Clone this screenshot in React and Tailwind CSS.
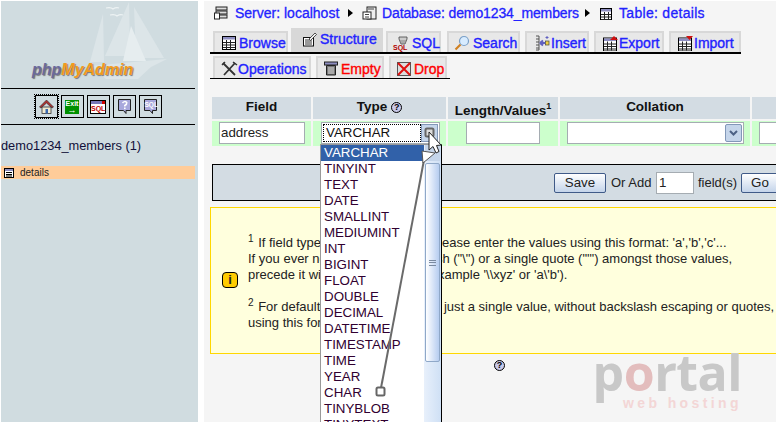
import React from "react";

const IconBox = ({ children, dotted }) => (
  <div className={`w-[23px] h-[23px] shrink-0 flex items-center justify-center border border-black ${dotted ? "outline-1 outline-dotted outline-black" : ""}`}>
    {children}
  </div>
);

const TableGlyph = ({ x = 0, y = 0, w = 13, h = 13 }) => (
  <g>
    <rect x={x + 0.5} y={y + 0.5} width={w} height={h} fill="#fff" stroke="#000" />
    <rect x={x + 1} y={y + 1} width={w - 1} height="2.5" fill="#8d8dc0" />
    <path d={`M${x + 1} ${y + 6.5}H${x + w} M${x + 1} ${y + 9}H${x + w} M${x + 1} ${y + 11.5}H${x + w} M${x + 4.5} ${y + 4}V${y + h} M${x + 8.5} ${y + 4}V${y + h}`} stroke="#222" strokeWidth="1" />
  </g>
);

const Svg = ({ w = 16, h = 16, children, className = "" }) => (
  <svg width={w} height={h} viewBox={`0 0 ${w} ${h}`} className={`shrink-0 ${className}`}>{children}</svg>
);

const Tab = ({ icon, label, red, active, cls }) => (
  <div className={`shrink-0 flex items-center border-t-2 border-x-2 border-[#d8d8d8] ${active ? "bg-[#d8d8d8] pb-[4px]" : "bg-[#e8e8e8] pt-[1px]"} ${cls}`}>
    {icon}
    <span className={`text-[14px] leading-none whitespace-nowrap ${red ? "text-[#ff0000]" : "text-[#2222ff]"}`} style={{ WebkitTextStroke: "0.35px currentColor" }}>{label}</span>
  </div>
);

const types = ["VARCHAR","TINYINT","TEXT","DATE","SMALLINT","MEDIUMINT","INT","BIGINT","FLOAT","DOUBLE","DECIMAL","DATETIME","TIMESTAMP","TIME","YEAR","CHAR","TINYBLOB","TINYTEXT"];

const Help = ({ className = "" }) => (
  <span className={`inline-flex w-[11px] h-[11px] rounded-full border border-black bg-[#c8c8e8] items-center justify-center text-[9px] leading-none text-black font-bold ${className}`}>?</span>
);

const Th = ({ w, children, cls }) => (
  <div className={`${w} shrink-0 h-[22px] bg-[#d3dce3] flex justify-center text-[13.5px] font-bold text-[#111] ${cls || "items-center pb-[2px]"}`}>{children}</div>
);

export default function App() {
  return (
    <div className="relative w-[776px] h-[422px] overflow-hidden flex bg-white text-black" style={{ fontFamily: '"Liberation Sans", Arial, sans-serif' }}>
      {/* Sidebar */}
      <aside className="w-[197px] h-[421px] mt-[1px] ml-[1px] shrink-0 bg-[#d0dce0] flex flex-col relative">
        <div className="h-[87px] relative shrink-0 overflow-hidden">
          <svg width="197" height="87" className="absolute left-0 top-0">
            <g fill="#dce5e8">
              <path d="M128 1 L129 55 L104 55 Z" />
              <path d="M102 13 L103 61 L89 61 Z" />
              <path d="M133 6 L163 57 L135 57 Z" />
              <path d="M130 25 L145 60 L122 60 Z" fill="#e6edef" />
              <path d="M89 65 L166 58 L150 66 L137 78 L105 78 Z" />
            </g>
            <path d="M105 7 q5 -1 7 1 q3 -2 6 -1 M109 14 q5 -1 7 1 q3 -2 6 -1" stroke="#eef3f4" strokeWidth="1.2" fill="none" />
          </svg>
          <div className="absolute left-[31px] top-[61px] text-[16px] font-bold italic leading-none" style={{ textShadow: "1px 1px 1px #777" }}>
            <span className="text-[#6a6a9c]">php</span><span className="text-[#f29b1d]">MyAdmin</span>
          </div>
        </div>
        <div className="w-[194px] border-y border-black h-[37px] flex items-center justify-center gap-[3px] shrink-0">
          <IconBox dotted>
            <Svg w={15} h={15}>
              <path d="M7.500 1 L0.500 8 L2 9 L7.500 4 L13 9 L14.500 8 Z" fill="#b03030" stroke="#333" strokeWidth=".7" />
              <rect x="3" y="8" width="9" height="6.500" fill="#f0ead0" stroke="#333" strokeWidth=".8" />
              <rect x="6.500" y="10" width="2.500" height="4.500" fill="#3868b0" />
            </Svg>
          </IconBox>
          <IconBox>
            <div className="w-[14px] h-[14px] bg-[#009000] flex flex-col items-center text-white text-[7px] font-bold leading-[7px]">
              <span>Exit</span><span className="text-[9px] leading-[7px]">→</span>
            </div>
          </IconBox>
          <IconBox>
            <div className="w-[16px] h-[14px] border border-black bg-white flex flex-col">
              <div className="h-[3px] bg-[#7878b8] flex justify-end"><div className="w-[3px] h-[3px] bg-[#d00000]" /></div>
              <span className="text-[#c00000] text-[7px] font-bold leading-[9px] text-center">SQL</span>
            </div>
          </IconBox>
          <IconBox>
            <Svg w={15} h={17}>
              <path d="M1.500 1.500H13.500V12.500H9V15.500L6.500 12.500H1.500Z" fill="#a8a8dc" stroke="#222" />
              <path d="M5.500 5Q7.500 2.500 9.800 4.500Q10 6.500 7.800 7.500V8.500" stroke="#fff" strokeWidth="1.500" fill="none" />
              <rect x="7" y="9.500" width="1.600" height="1.600" fill="#fff" />
            </Svg>
          </IconBox>
          <IconBox>
            <div className="relative w-[15px] h-[17px]">
              <Svg w={15} h={17}>
                <path d="M1.500 1.500H13.500V12.500H9.500V15.500L7 12.500H1.500Z" fill="#a8a8dc" stroke="#222" />
              </Svg>
              <span className="absolute left-[2px] top-[4px] text-white text-[6.500px] font-bold leading-none">SQL</span>
            </div>
          </IconBox>
        </div>
        <div className="text-[12.8px] leading-[16px] mt-[13px] text-[#10103a] shrink-0">demo1234_members (1)</div>
        <div className="w-[194px] h-[13px] mt-[12px] bg-[#ffcc99] flex items-center pl-[3px] gap-[6px] shrink-0">
          <Svg w={10} h={10}>
            <rect x=".5" y=".5" width="9" height="9" fill="#fff" stroke="#000" />
            <rect x="1" y="1" width="8" height="2" fill="#8d8dc0" />
            <path d="M2 4.500H8 M2 6.500H8 M2 8H8" stroke="#000" />
          </Svg>
          <span className="text-[10px] leading-none text-[#222]">details</span>
        </div>
      </aside>
      <div className="w-[6px] shrink-0 bg-white" />
      {/* Main */}
      <main className="w-[572px] shrink-0 h-full bg-[#f5f5f5] mt-[1px] overflow-hidden">
        <div className="w-[800px]">
          <div className="h-[24px] pl-[10px] flex items-center text-[14px] text-[#2222ff]" style={{ WebkitTextStroke: "0.3px currentColor" }}>
            <Svg w={16} h={14}>
              <rect x="2" y="1" width="11" height="3" fill="#ddd" stroke="#222" />
              <rect x="2" y="5" width="11" height="3" fill="#ddd" stroke="#222" />
              <rect x="2" y="9" width="11" height="3" fill="#ddd" stroke="#222" />
              <rect x="0.500" y="7" width="5" height="6" fill="#fff" stroke="#222" />
            </Svg>
            <span className="ml-[5px] w-[105px] whitespace-nowrap">Server: localhost</span>
            <span className="w-0 h-0 border-y-[4px] border-y-transparent border-l-[5px] border-l-black ml-[8px] mr-[9px]" />
            <Svg w={15} h={14}>
              <rect x="5" y="1" width="9" height="12" fill="#eee" stroke="#222" />
              <rect x="1" y="6" width="8" height="7" fill="#fff" stroke="#222" />
              <path d="M6 3H12 M3 8.500H7 M3 11H7" stroke="#444" />
            </Svg>
            <span className="ml-[5px] w-[197px] whitespace-nowrap tracking-[-0.12px]">Database: demo1234_members</span>
            <span className="w-0 h-0 border-y-[4px] border-y-transparent border-l-[5px] border-l-black ml-[6px] mr-[10px]" />
            <Svg w={12} h={13}><TableGlyph w={11} h={11} y={1} /></Svg>
            <span className="ml-[7px] tracking-[0.3px]">Table: details</span>
          </div>
          <div className="w-[531px] ml-[6px] border-b-[2px] border-black flex items-end h-[29px]">
            <Tab cls="ml-[3px] w-[75px] h-[21px] pl-[7px] gap-[3px]" label="Browse" icon={<Svg w={14} h={14}><TableGlyph /></Svg>} />
            <Tab active cls="ml-[3px] w-[92px] h-[24px] pl-[9px] gap-[3px]" label="Structure" icon={<Svg w={15} h={15}>
              <rect x="1.500" y="5.500" width="10" height="8.500" fill="#fff" stroke="#111" />
              <path d="M3 8H10 M3 10H10 M3 12H10" stroke="#333" />
              <path d="M7 7L13 1L14.500 2.500L8.500 8.500Z" fill="#eee" stroke="#111" strokeWidth=".7" />
            </Svg>} />
            <Tab cls="ml-[3px] w-[55px] h-[21px] pl-[5px] gap-[2px]" label="SQL" icon={<div className="relative w-[17px] h-[15px] shrink-0">
              <Svg w={17} h={15}>
                <path d="M6 1H14V3L12 8H8L6 3Z" fill="#ccc" stroke="#444" strokeWidth=".8" />
                <path d="M8 4V8 M10 4V8 M12 4V8" stroke="#888" />
              </Svg>
              <span className="absolute left-0 top-[8px] text-[#b00000] text-[7px] font-bold leading-none">SQL</span>
            </div>} />
            <Tab cls="ml-[6px] w-[73px] h-[21px] pl-[5px] gap-[3px]" label="Search" icon={<Svg w={16} h={16}>
              <circle cx="10" cy="6" r="4.500" fill="#d8ecff" stroke="#7aa0c8" strokeWidth="1.200" />
              <path d="M6.500 9.500L1.500 14.500" stroke="#d08020" strokeWidth="2.200" />
            </Svg>} />
            <Tab cls="ml-[5px] w-[64px] h-[21px] pl-[7px] gap-[1px]" label="Insert" icon={<Svg w={16} h={16}>
              <path d="M2 1H5V15H2 M2 4H5 M2 7H5 M2 10H5 M2 13H5" stroke="#555" fill="none" />
              <path d="M11 8H6M6 8L9 5.500M6 8L9 10.500" stroke="#6060c0" strokeWidth="2" fill="none" />
              <rect x="11.500" y="6" width="3.500" height="4" fill="#f0d040" stroke="#444" strokeWidth=".7" />
              <path d="M13 1V4 M11.500 2.500H14.500" stroke="#6060c0" />
            </Svg>} />
            <Tab cls="ml-[5px] w-[70px] h-[21px] pl-[7px] gap-[1px]" label="Export" icon={<Svg w={15} h={15}>
              <TableGlyph y={1.500} />
              <path d="M7 4L11 0L15 4Z" fill="#d01010" />
            </Svg>} />
            <Tab cls="ml-[5px] w-[72px] h-[21px] pl-[7px] gap-[1px]" label="Import" icon={<Svg w={15} h={15}>
              <TableGlyph y={1.500} />
              <path d="M8 0H15L11.500 4Z" fill="#d01010" />
            </Svg>} />
          </div>
          <div className="w-[240px] ml-[6px] border-b border-black flex h-[25px] items-end">
            <Tab cls="ml-[3px] w-[98px] h-[22px] pl-[6px]" label="Operations" icon={<Svg w={17} h={16}>
              <path d="M2 2L14 14 M14 2L3 14" stroke="#333" strokeWidth="1.800" />
              <path d="M1 4L4 1 M12 1L16 4" stroke="#333" strokeWidth="1.500" />
            </Svg>} />
            <Tab red cls="ml-[5px] w-[68px] h-[22px] pl-[6px] gap-[3px]" label="Empty" icon={<Svg w={14} h={15}>
              <rect x="0.500" y="1" width="13" height="3" fill="#8d8dc0" stroke="#222" />
              <path d="M2.500 4.500H11.500V14H2.500Z" fill="#777" stroke="#222" />
              <path d="M5 6V13 M7 6V13 M9 6V13" stroke="#ddd" />
            </Svg>} />
            <Tab red cls="ml-[5px] w-[58px] h-[22px] pl-[6px] gap-[3px]" label="Drop" icon={<Svg w={14} h={15}>
              <rect x="0.500" y="1.500" width="13" height="13" fill="#ddd" stroke="#555" />
              <path d="M1 2L13 14 M13 2L1 14" stroke="#e01010" strokeWidth="2" />
            </Svg>} />
          </div>

          <div className="ml-[8px] mt-[18px] flex gap-[2px]">
            <Th w="w-[99px]">Field</Th>
            <Th w="w-[133px]"><span className="mr-[4px]">Type</span><Help /></Th>
            <Th w="w-[110px]" cls="items-end pb-[1px]"><span className="leading-[15px]">Length/Values<sup className="text-[9px] leading-none relative -top-[1px] align-[5px]">1</sup></span></Th>
            <Th w="w-[190px]">Collation</Th>
            <Th w="w-[60px]"> </Th>
          </div>
          <div className="ml-[8px] mt-[2px] flex gap-[2px]">
            <div className="w-[99px] h-[25px] shrink-0 bg-[#ccffcc] pl-[7px] pt-[1px]">
              <div className="w-[86px] h-[22px] border border-[#a5acb2] bg-white text-[13.33px] pl-[1px] flex items-center text-[#222]">address</div>
            </div>
            <div className="w-[133px] h-[25px] shrink-0 bg-[#ccffcc] pl-[8px] pt-[1px]">
              <div className="w-[119px] h-[22px] border border-[#a5acb2] bg-white p-[1px] flex">
                <div className="flex-1 outline-1 outline-dotted outline-black -outline-offset-1 text-[13.33px] leading-[18px] pl-[3px] text-[#111]">VARCHAR</div>
                <div className="w-[17px] h-[18px] bg-[#c5d5ea] border border-[#8298b8]" />
              </div>
            </div>
            <div className="w-[110px] h-[25px] shrink-0 bg-[#ccffcc] pl-[18px] pt-[1px]">
              <div className="w-[74px] h-[22px] border border-[#a5acb2] bg-white" />
            </div>
            <div className="w-[190px] h-[25px] shrink-0 bg-[#ccffcc] pl-[7px] pt-[1px]">
              <div className="w-[177px] h-[22px] border border-[#a5acb2] bg-white p-[1px] flex justify-end">
                <div className="w-[17px] h-[18px] bg-[#c5d5ea] border border-[#8298b8] rounded-[2px] flex items-center justify-center">
                  <Svg w={9} h={6}><path d="M1 1L4.500 4.500L8 1" stroke="#4d6185" strokeWidth="2" fill="none" /></Svg>
                </div>
              </div>
            </div>
            <div className="w-[60px] h-[25px] shrink-0 bg-[#ccffcc] pl-[7px] pt-[1px]">
              <div className="w-[40px] h-[22px] border border-[#a5acb2] bg-white" />
            </div>
          </div>

          <div className="ml-[8px] mt-[18px] w-[620px] h-[37px] border-y border-black border-l bg-[#d3dce3] flex items-center pl-[341px] text-[13px] text-[#222]">
            <button className="w-[52px] h-[20px] shrink-0 border border-[#3f5a88] rounded-[2px] bg-gradient-to-b from-white to-[#c4d4ea] text-[13.33px] leading-none">Save</button>
            <span className="ml-[5px] w-[40px] shrink-0 whitespace-nowrap">Or Add</span>
            <div className="ml-[5px] w-[38px] h-[22px] shrink-0 border border-[#a5acb2] bg-white pl-[2px] leading-[20px] text-[13.33px]">1</div>
            <span className="ml-[4px] w-[38px] shrink-0 whitespace-nowrap">field(s)</span>
            <button className="ml-[5px] w-[38px] h-[20px] shrink-0 border border-[#3f5a88] rounded-[2px] bg-gradient-to-b from-white to-[#c4d4ea] leading-none text-[13.33px]">Go</button>
          </div>

          <div className="ml-[6px] mt-[6px] w-[640px] h-[147px] border border-[#ffd700] bg-[#ffffdd] flex items-center text-[13px] leading-[16px] text-[#222]">
            <div className="w-[37px] shrink-0 pl-[11px]">
              <div className="w-[16px] h-[16px] -mt-[2px] rounded-[4px] border border-black bg-[#ffcc00] flex items-center justify-center text-[13px] font-bold leading-none">i</div>
            </div>
            <div className="pt-[4px] whitespace-nowrap">
              <div className="h-[16px]"><sup className="text-[10px] leading-none mr-[1px]">1</sup> If field type is "enum" or "set", please enter the values using this format: 'a','b','c'...</div>
              <div className="h-[16px]">If you ever need to put a backslash ("\") or a single quote ("'") amongst those values,</div>
              <div className="h-[16px]">precede it with a backslash (for example '\\xyz' or 'a\'b').</div>
              <div className="h-[16px] mt-[16px]"><sup className="text-[10px] leading-none mr-[1px]">2</sup> For default values, please enter just a single value, without backslash escaping or quotes,</div>
              <div className="h-[16px]">using this format: a</div>
            </div>
          </div>
          <div className="ml-[290px] mt-[6px] flex"><Help /></div>
        </div>
      </main>

      {/* Open dropdown */}
      <div className="absolute left-[320px] top-[144px] w-[122px] h-[278px] bg-white border-t border-t-[#999] border-x border-l-[#999] border-r-black flex overflow-hidden">
        <div className="flex-1 min-w-0">
          {types.map((t, i) => (
            <div key={t} className={`h-[16px] leading-[16px] text-[13.33px] pl-[3px] whitespace-nowrap ${i === 0 ? "bg-[#3161a9] text-white" : "text-[#300030]"}`}>{t}</div>
          ))}
        </div>
        <div className="w-[17px] shrink-0 bg-gradient-to-r from-[#e8f0fb] to-[#cfe0f5] flex flex-col">
          <div className="h-[16px] w-[15px] ml-[1px] bg-[#c5d5ea]" />
          <div className="mt-[2px] w-[15px] ml-[1px] h-[199px] rounded-[2px] border border-[#8fa8c8] bg-gradient-to-r from-white to-[#b6cdf0] flex items-center justify-center">
            <div className="w-[7px] h-[6px] border-y border-[#7a8aa0] flex items-center"><div className="w-full h-px bg-[#7a8aa0]" /></div>
          </div>
        </div>
      </div>

      {/* Tutorial arrow and cursor */}
      <svg width="776" height="422" className="absolute left-0 top-0 pointer-events-none">
        <path d="M381 388 L424 160" stroke="#6a6a6a" strokeWidth="2" />
        <path d="M422 151 L435 153 L423 163 Z" fill="#fff" stroke="#555" />
        <rect x="376.500" y="387.500" width="8" height="8" rx="1.500" fill="#fff" stroke="#666" strokeWidth="2" />
        <rect x="425.500" y="128.500" width="8" height="8" rx="1.500" fill="#ddd" stroke="#666" strokeWidth="2" />
        <path d="M429 132 L429 150 L433 146.500 L436 153 L439 151.500 L436.500 145.500 L441 145 Z" fill="#fff" stroke="#222" />
      </svg>

      {/* Watermark */}
      <div className="absolute left-[592px] top-[349px] w-[150px] pointer-events-none select-none text-right">
        <div className="text-[50px] leading-[46px] font-bold tracking-[-0.5px] text-[#c8c8c8]" style={{ fontFamily: '"Open Sans", sans-serif' }}>p<span className="text-[#e3bdbd]">o</span>rtal</div>
        <div className="text-[14px] leading-[16px] font-bold tracking-[3.400px] text-[#f3d6d6]">web hosting</div>
      </div>
    </div>
  );
}
